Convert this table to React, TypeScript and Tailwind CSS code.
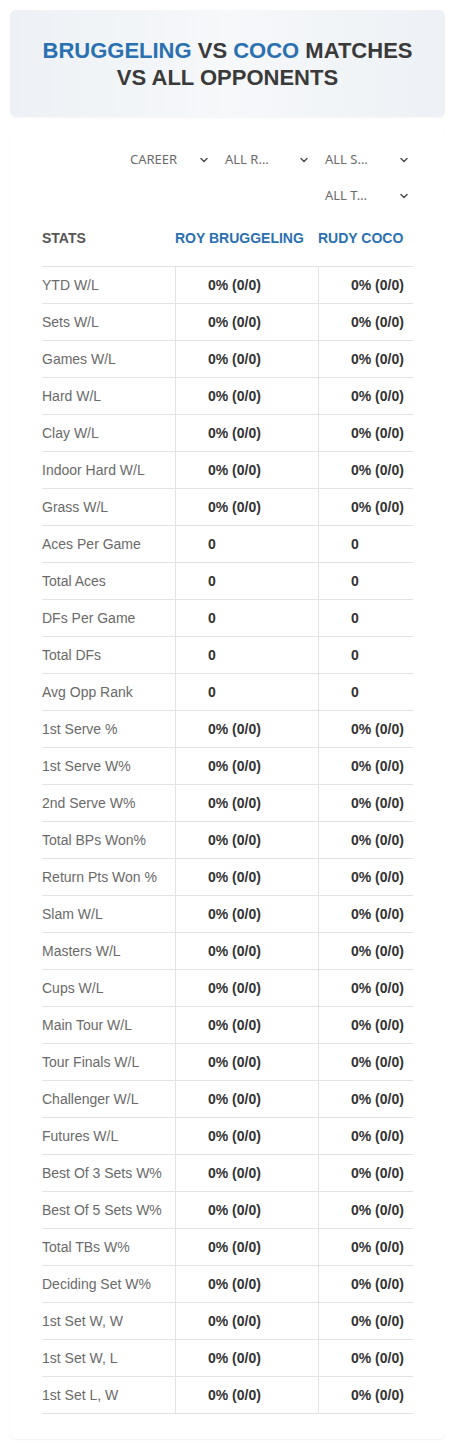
import { ChevronDown } from 'lucide-react';

const rows: { label: string; value: string }[] = [
  { label: 'YTD W/L', value: '0% (0/0)' },
  { label: 'Sets W/L', value: '0% (0/0)' },
  { label: 'Games W/L', value: '0% (0/0)' },
  { label: 'Hard W/L', value: '0% (0/0)' },
  { label: 'Clay W/L', value: '0% (0/0)' },
  { label: 'Indoor Hard W/L', value: '0% (0/0)' },
  { label: 'Grass W/L', value: '0% (0/0)' },
  { label: 'Aces Per Game', value: '0' },
  { label: 'Total Aces', value: '0' },
  { label: 'DFs Per Game', value: '0' },
  { label: 'Total DFs', value: '0' },
  { label: 'Avg Opp Rank', value: '0' },
  { label: '1st Serve %', value: '0% (0/0)' },
  { label: '1st Serve W%', value: '0% (0/0)' },
  { label: '2nd Serve W%', value: '0% (0/0)' },
  { label: 'Total BPs Won%', value: '0% (0/0)' },
  { label: 'Return Pts Won %', value: '0% (0/0)' },
  { label: 'Slam W/L', value: '0% (0/0)' },
  { label: 'Masters W/L', value: '0% (0/0)' },
  { label: 'Cups W/L', value: '0% (0/0)' },
  { label: 'Main Tour W/L', value: '0% (0/0)' },
  { label: 'Tour Finals W/L', value: '0% (0/0)' },
  { label: 'Challenger W/L', value: '0% (0/0)' },
  { label: 'Futures W/L', value: '0% (0/0)' },
  { label: 'Best Of 3 Sets W%', value: '0% (0/0)' },
  { label: 'Best Of 5 Sets W%', value: '0% (0/0)' },
  { label: 'Total TBs W%', value: '0% (0/0)' },
  { label: 'Deciding Set W%', value: '0% (0/0)' },
  { label: '1st Set W, W', value: '0% (0/0)' },
  { label: '1st Set W, L', value: '0% (0/0)' },
  { label: '1st Set L, W', value: '0% (0/0)' },
];

const filters = ['CAREER', 'ALL R…', 'ALL S…', 'ALL T…'];

const FilterSelect = ({ label, first }: { label: string; first?: boolean }) => (
  <div
    className={`flex h-[36px] w-[100px] items-center justify-between pr-[3px] font-['Noto_Sans',sans-serif] text-[13px] text-[#6b6b6b] ${
      first ? 'pl-[17px]' : 'pl-3'
    }`}
  >
    <span>{label}</span>
    <ChevronDown size={12} strokeWidth={3.2} className="text-[#555]" />
  </div>
);

const App = () => {
  return (
    <div className="min-h-[1448px] w-full bg-white p-[10px] font-['Liberation_Sans',Arial,sans-serif]">
      <section className="flex h-[107px] flex-col items-center justify-center rounded-md bg-gradient-to-r from-[#edf1f5] via-[#f6f8fa] to-[#edf1f5] shadow-[0_1px_2px_rgba(0,0,0,0.04)]">
        <h1 className="text-center text-[22px] font-bold leading-[27px] text-[#3a3a3a]">
          <span className="text-[#2b70b0]">BRUGGELING</span> VS{' '}
          <span className="text-[#2b70b0]">COCO</span> MATCHES
          <br />
          VS ALL OPPONENTS
        </h1>
      </section>

      <section className="mt-[13px] rounded-md bg-white px-[32px] pb-[25px] pt-[12px] shadow-[0_1px_2px_rgba(0,0,0,0.06)]">
        <div className="flex flex-wrap justify-end">
          {filters.map((f, i) => (
            <FilterSelect key={f} label={f} first={i === 0} />
          ))}
        </div>

        <div className="flex pb-[20px] pt-[16px] text-[14px] font-bold leading-[16px]">
          <div className="w-[133px] text-[#555]">STATS</div>
          <div className="w-[143px] text-[#2b70b0]">ROY BRUGGELING</div>
          <div className="flex-1 text-[#2b70b0]">RUDY COCO</div>
        </div>

        <div className="border-t border-[#e3e3e3]">
          {rows.map((row) => (
            <div
              key={row.label}
              className="flex h-[37px] border-b border-[#e3e3e3] text-[14px]"
            >
              <div className="flex w-[133px] items-center text-[#6a6a6a]">
                {row.label}
              </div>
              <div className="flex w-[143px] items-center border-l border-[#e3e3e3] pl-[32px] font-bold text-[#333]">
                {row.value}
              </div>
              <div className="flex flex-1 items-center border-l border-[#e3e3e3] pl-[32px] font-bold text-[#333]">
                {row.value}
              </div>
            </div>
          ))}
        </div>
      </section>
    </div>
  );
};

export default App;
